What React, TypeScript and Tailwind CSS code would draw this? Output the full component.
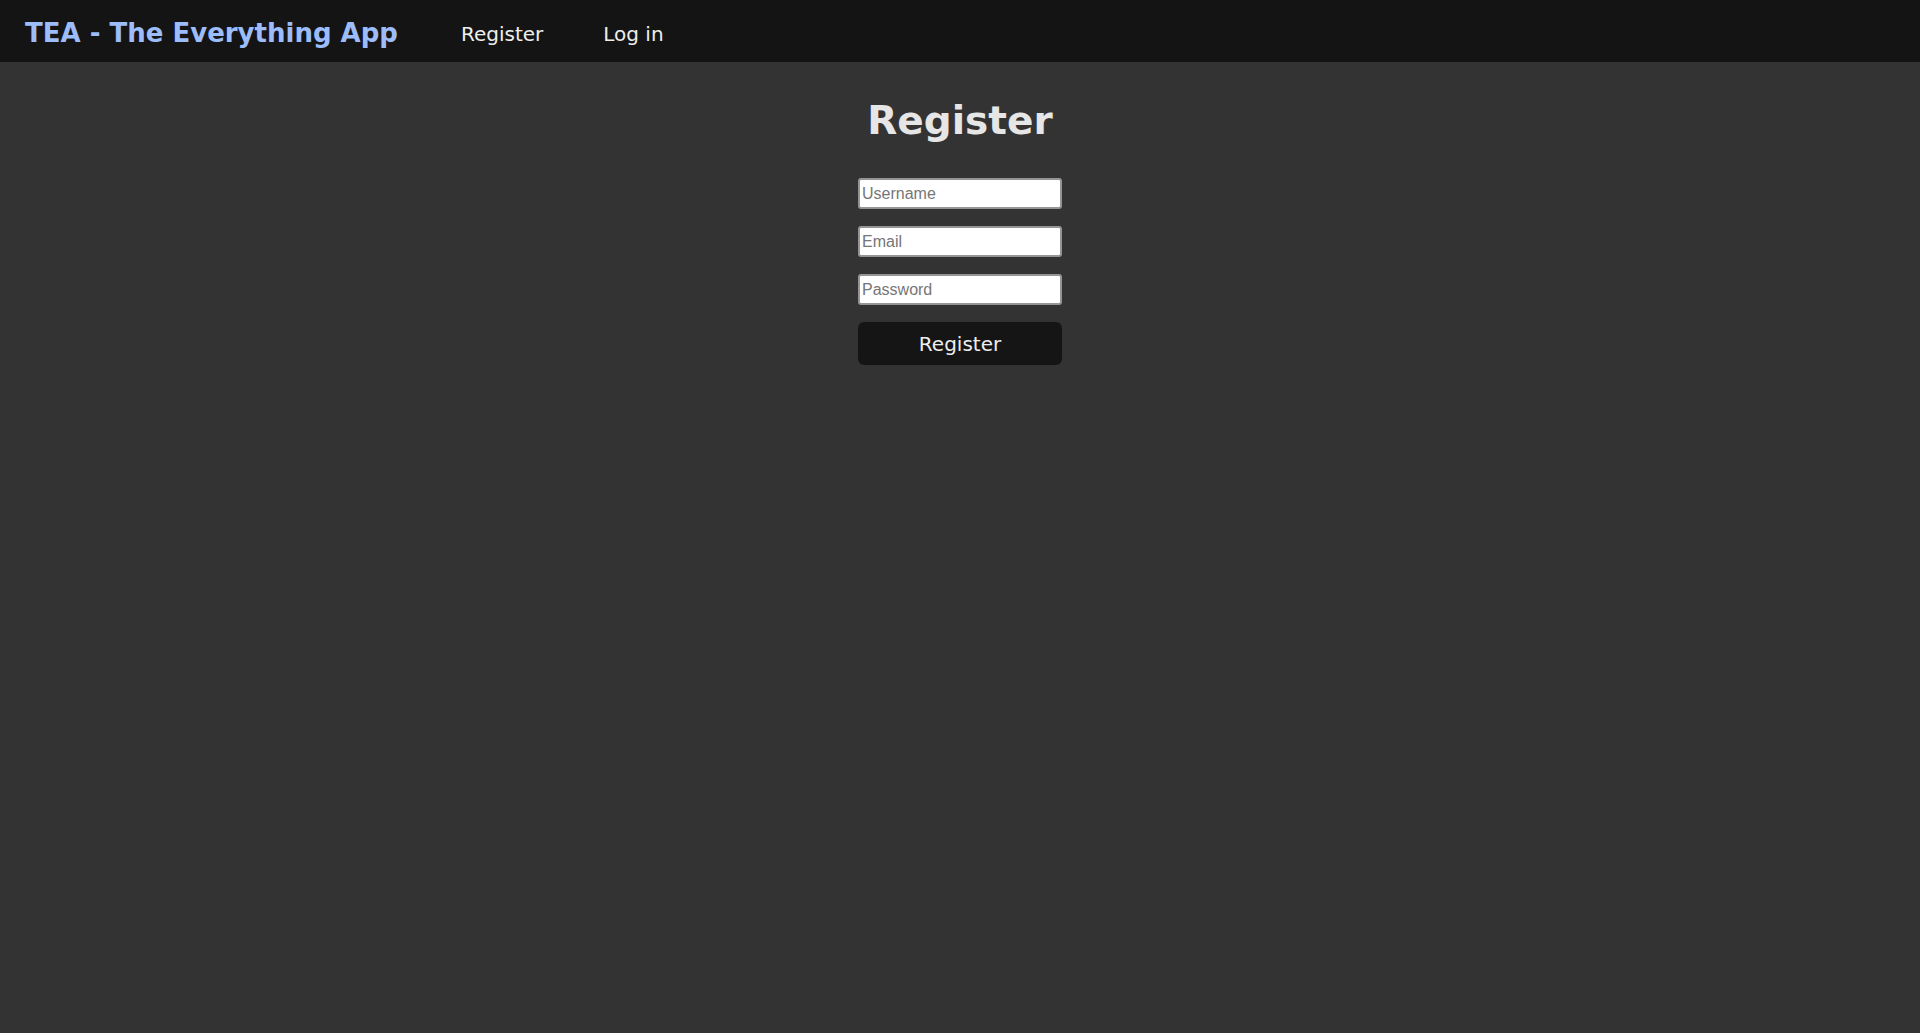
export default function App() {
  return (
    <div className="min-h-screen bg-[#333333] font-['DejaVu_Sans',sans-serif]">
      <nav className="h-[62px] bg-[#141414] flex items-center px-[25px] pt-[5px]">
        <a className="text-[26px] font-bold text-[#9dbcfa] mr-[63px]">TEA - The Everything App</a>
        <a className="text-[20px] text-[#eeeeee] mr-[60px]">Register</a>
        <a className="text-[20px] text-[#eeeeee]">Log in</a>
      </nav>

      <main className="flex flex-col items-center">
        <h1 className="mt-[35px] text-[39px] leading-[47px] font-bold text-[#e6e6e6]">Register</h1>
        <form className="mt-[34px] flex flex-col gap-[17px] w-[204px]">
          <input
            placeholder="Username"
            className="h-[31px] bg-white border-2 border-[#959595] rounded-[3px] px-[2px] text-[16px] font-['Liberation_Sans',sans-serif] placeholder:text-[#767676] outline-none"
          />
          <input
            placeholder="Email"
            className="h-[31px] bg-white border-2 border-[#959595] rounded-[3px] px-[2px] text-[16px] font-['Liberation_Sans',sans-serif] placeholder:text-[#767676] outline-none"
          />
          <input
            type="password"
            placeholder="Password"
            className="h-[31px] bg-white border-2 border-[#959595] rounded-[3px] px-[2px] text-[16px] font-['Liberation_Sans',sans-serif] placeholder:text-[#767676] outline-none"
          />
          <button
            type="button"
            className="h-[43px] bg-[#151515] rounded-[6px] text-[20px] text-[#eeeeee]"
          >
            Register
          </button>
        </form>
      </main>
    </div>
  );
}
